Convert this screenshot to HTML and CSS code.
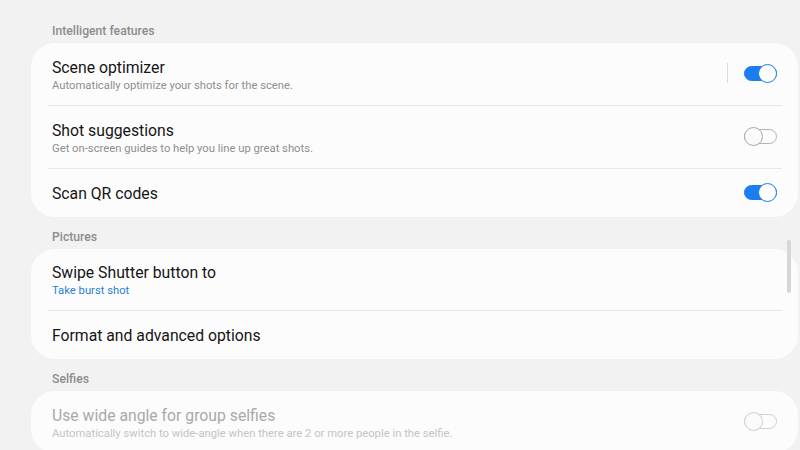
FILE: index.html
```html
<!DOCTYPE html>
<html>
<head>
<meta charset="utf-8">
<link rel="stylesheet" href="styles.css">
</head>
<body>
<div class="page">
  <div class="section-head">Intelligent features</div>
  <div class="card">
    <div class="row two">
      <div class="texts">
        <div class="title">Scene optimizer</div>
        <div class="sub">Automatically optimize your shots for the scene.</div>
      </div>
      <div class="vsep"></div>
      <div class="switch on"><span class="knob"></span></div>
    </div>
    <div class="divider"></div>
    <div class="row two">
      <div class="texts">
        <div class="title">Shot suggestions</div>
        <div class="sub">Get on-screen guides to help you line up great shots.</div>
      </div>
      <div class="switch"><span class="knob"></span></div>
    </div>
    <div class="divider"></div>
    <div class="row one">
      <div class="texts">
        <div class="title">Scan QR codes</div>
      </div>
      <div class="switch on"><span class="knob"></span></div>
    </div>
  </div>

  <div class="section-head">Pictures</div>
  <div class="card">
    <div class="row two tight">
      <div class="texts">
        <div class="title">Swipe Shutter button to</div>
        <div class="sub link">Take burst shot</div>
      </div>
    </div>
    <div class="divider"></div>
    <div class="row one">
      <div class="texts">
        <div class="title">Format and advanced options</div>
      </div>
    </div>
  </div>

  <div class="section-head">Selfies</div>
  <div class="card disabled">
    <div class="row two">
      <div class="texts">
        <div class="title">Use wide angle for group selfies</div>
        <div class="sub">Automatically switch to wide-angle when there are 2 or more people in the selfie.</div>
      </div>
      <div class="switch"><span class="knob"></span></div>
    </div>
  </div>
</div>
<div class="scrollbar"></div>
</body>
</html>
```

FILE: styles.css
```css
html, body {
  margin: 0;
  padding: 0;
  width: 800px;
  height: 450px;
  overflow: hidden;
  background: #f2f2f2;
  font-family: Roboto, "Noto Sans", Arial, sans-serif;
}

.page {
  padding: 11px 2px 0 31px;
}

.section-head {
  height: 32px;
  box-sizing: border-box;
  padding: 13px 0 0 21px;
  font-size: 12.2px;
  line-height: 15px;
  font-weight: 500;
  color: #8c8c8c;
}

.card {
  background: #fcfcfc;
  border-radius: 24px;
  overflow: hidden;
}

.row {
  display: flex;
  align-items: center;
  padding: 0 21px 0 21px;
}

.row.two {
  padding-top: 15px;
  padding-bottom: 11px;
}

.row.two.tight {
  padding-top: 14px;
  padding-bottom: 11px;
}

.row.one {
  padding-top: 15px;
  padding-bottom: 13px;
}

.texts {
  flex: 1;
  min-width: 0;
}

.title {
  font-size: 15.75px;
  line-height: 20px;
  color: #151515;
}

.sub {
  font-size: 11.25px;
  line-height: 16px;
  color: #8e8e8e;
}

.sub.link {
  color: #2a7fd9;
}

.divider {
  height: 1px;
  background: #e6e6e6;
  margin: 0 16px 0 17px;
}

.vsep {
  width: 1px;
  height: 20px;
  background: #dcdcdc;
  margin-right: 16px;
}

.row.two .switch,
.row.two .vsep {
  margin-top: -3px;
  margin-bottom: 3px;
}

.row.one .switch {
  margin-top: -2px;
  margin-bottom: 2px;
}

.switch {
  position: relative;
  width: 33px;
  height: 19px;
  flex: none;
}

.switch::before {
  content: "";
  position: absolute;
  left: 0;
  right: 0;
  top: 2px;
  height: 15px;
  box-sizing: border-box;
  border-radius: 8px;
  border: 1.3px solid #b3b3b3;
  background: #fcfcfc;
}

.switch .knob {
  position: absolute;
  top: 0;
  left: 0;
  width: 19px;
  height: 19px;
  box-sizing: border-box;
  border-radius: 50%;
  border: 1.3px solid #a9a9a9;
  background: #fafafa;
}

.switch.on::before {
  background: #1b7ef0;
  border-color: #1b7ef0;
}

.switch.on .knob {
  left: auto;
  right: 0;
  border-color: #1b7ef0;
  background: #ffffff;
}

.disabled .title {
  color: #a9a9a9;
}

.disabled .sub {
  color: #c4c4c4;
}

.disabled .switch::before,
.disabled .switch .knob {
  border-color: #cfcfcf;
}

.scrollbar {
  position: absolute;
  left: 787px;
  top: 240px;
  width: 4px;
  height: 53px;
  border-radius: 2px;
  background: #d6d6d6;
}
```
